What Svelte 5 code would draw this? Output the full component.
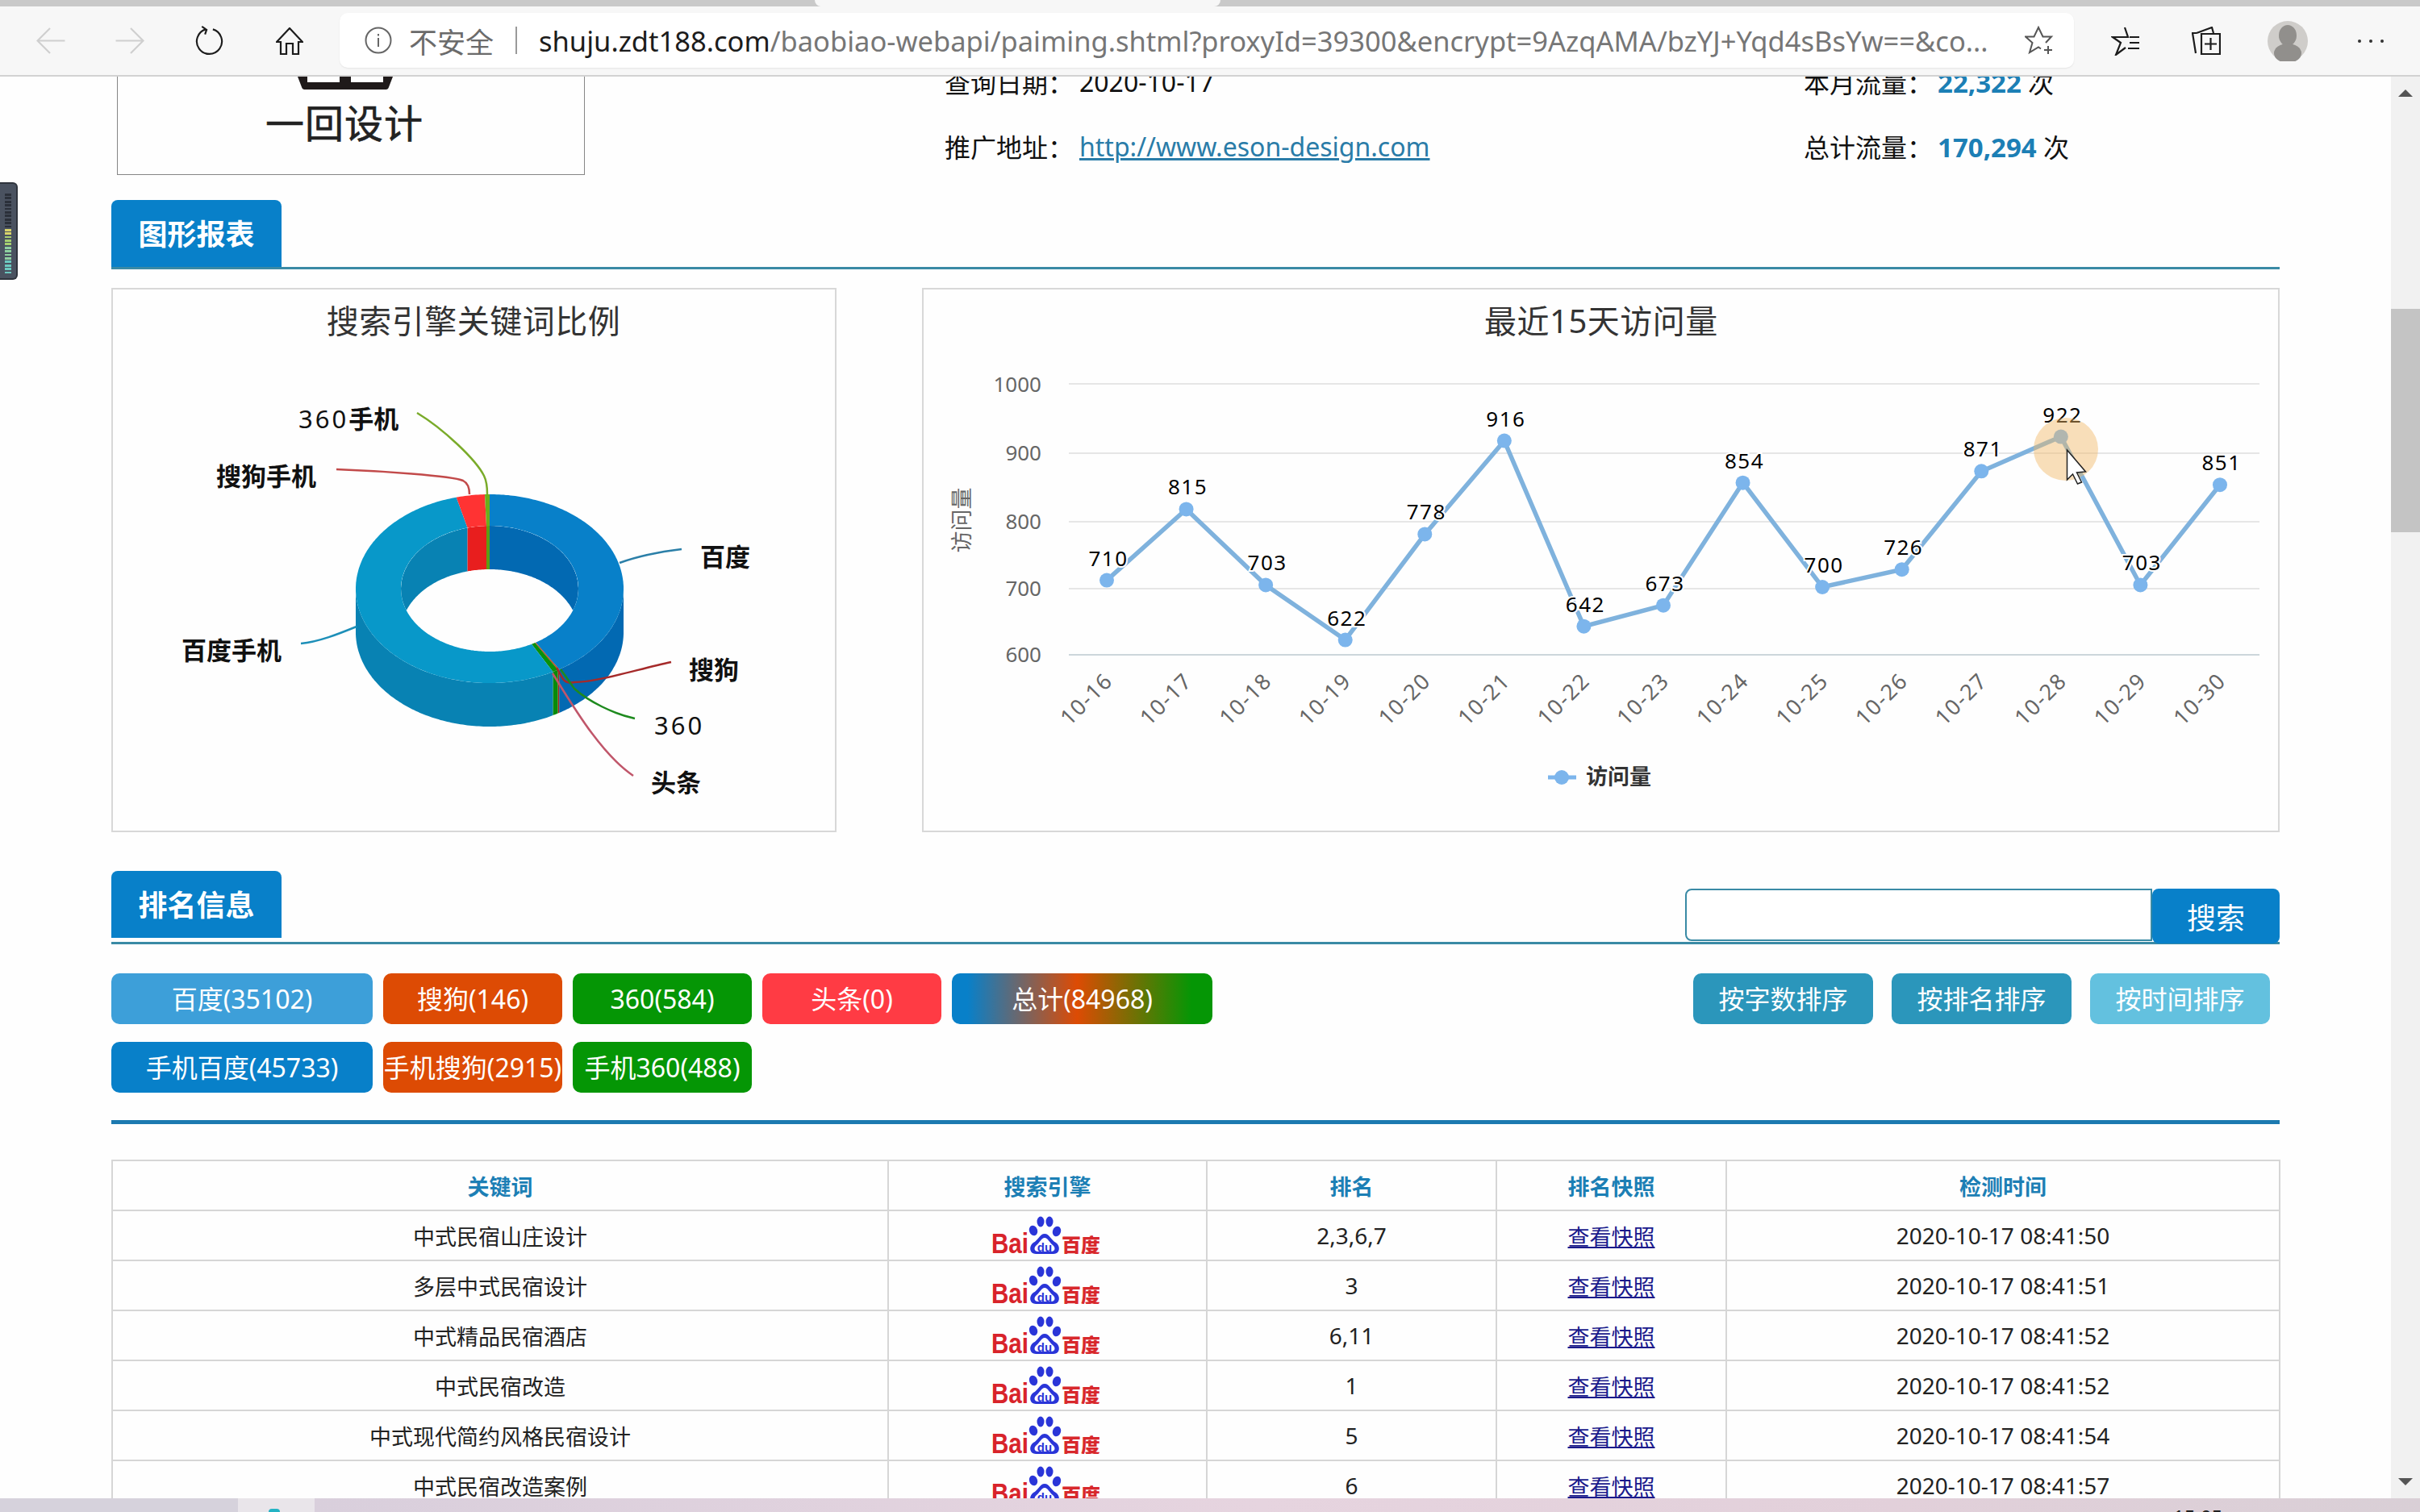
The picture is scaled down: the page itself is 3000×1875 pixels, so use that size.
<script>
	// donut geometry, in page coordinates of the left card
	const cx = 607, cy = 730, rx = 166, ry = 117, irx = 110, iry = 78, depth = 54;

	const slices = [
		{ name: '百度', value: 35102, top: '#0880c9', side: '#0269b2', wall: '#0269b2' },
		{ name: '搜狗', value: 146, top: '#c9401a', side: '#a82020', wall: '#a82020' },
		{ name: '360', value: 584, top: '#0a900a', side: '#0a8a0a', wall: '#0a8a0a' },
		{ name: '百度手机', value: 45733, top: '#0898c9', side: '#0882b3', wall: '#0882b3' },
		{ name: '搜狗手机', value: 2915, top: '#ff3333', side: '#e81e1e', wall: '#e81e1e' },
		{ name: '360手机', value: 488, top: '#6cae1a', side: '#5e9e12', wall: '#5e9e12' }
	];
	const total = 84968;

	function arc(from, to, a, b, dy = 0) {
		const pts = [];
		const n = Math.max(2, Math.ceil(to - from));
		for (let i = 0; i <= n; i++) {
			const t = ((from + ((to - from) * i) / n) * Math.PI) / 180;
			pts.push([cx + a * Math.sin(t), cy - b * Math.cos(t) + dy]);
		}
		return pts;
	}
	const toD = (pts) => 'M' + pts.map((p) => p[0].toFixed(1) + ' ' + p[1].toFixed(1)).join('L') + 'Z';

	let start = 0;
	const donut = slices.map((s) => {
		const from = start;
		const to = start + (s.value / total) * 360;
		start = to;
		const sideFrom = Math.max(from, 90), sideTo = Math.min(to, 270);
		const walls = [[from, Math.min(to, 90)], [Math.max(from, 270), to]].filter((r) => r[1] > r[0]);
		return {
			...s,
			topD: toD([...arc(from, to, rx, ry), ...arc(from, to, irx, iry).reverse()]),
			sideD: sideTo > sideFrom
				? toD([...arc(sideFrom, sideTo, rx, ry), ...arc(sideFrom, sideTo, rx, ry, depth).reverse()])
				: null,
			wallDs: walls.map((r) => toD([...arc(r[0], r[1], irx, iry), ...arc(r[0], r[1], irx, iry, depth).reverse()]))
		};
	});

	const leaders = [
		{ d: 'M768 698 C790 690 820 684 845 681', color: '#2b7fa8' },
		{ d: 'M373 798 C395 796 420 786 442 777', color: '#1d8fb8' },
		{ d: 'M517 512 C550 532 590 570 600 590 Q604 598 604 613', color: '#7aab2a' },
		{ d: 'M417 582 C470 584 560 590 574 596 Q582 600 582 613', color: '#c24a4a' },
		{ d: 'M690 828 L698 842 Q702 848 712 846 C740 846 790 830 832 821', color: '#a52a2a' },
		{ d: 'M695 830 L712 854 C730 870 760 885 787 891', color: '#1e8a1e' },
		{ d: 'M685 835 C710 875 745 935 785 962', color: '#c0566a' }
	];

	// line chart
	const values = [710, 815, 703, 622, 778, 916, 642, 673, 854, 700, 726, 871, 922, 703, 851];
	const days = ['10-16', '10-17', '10-18', '10-19', '10-20', '10-21', '10-22', '10-23', '10-24', '10-25', '10-26', '10-27', '10-28', '10-29', '10-30'];
	const points = values.map((v, i) => ({ v, day: days[i], x: 1372 + i * 98.57, y: 812 - (v - 600) * 0.84 }));
	const linePts = points.map((p) => p.x.toFixed(1) + ',' + p.y.toFixed(1)).join(' ');
	const ticks = [{ v: 1000, y: 476 }, { v: 900, y: 562 }, { v: 800, y: 647 }, { v: 700, y: 730 }, { v: 600, y: 812 }];

	const filters = [
		{ label: '百度(35102)', cls: 'light' },
		{ label: '搜狗(146)', cls: 'orange' },
		{ label: '360(584)', cls: 'green' },
		{ label: '头条(0)', cls: 'red' },
		{ label: '总计(84968)', cls: 'mixed' },
		{ label: '手机百度(45733)', cls: 'blue' },
		{ label: '手机搜狗(2915)', cls: 'orange' },
		{ label: '手机360(488)', cls: 'green' }
	];

	const rows = [
		{ word: '中式民宿山庄设计', rank: '2,3,6,7', time: '2020-10-17 08:41:50' },
		{ word: '多层中式民宿设计', rank: '3', time: '2020-10-17 08:41:51' },
		{ word: '中式精品民宿酒店', rank: '6,11', time: '2020-10-17 08:41:52' },
		{ word: '中式民宿改造', rank: '1', time: '2020-10-17 08:41:52' },
		{ word: '中式现代简约风格民宿设计', rank: '5', time: '2020-10-17 08:41:54' },
		{ word: '中式民宿改造案例', rank: '6', time: '2020-10-17 08:41:57' }
	];

	const meter = Array.from({ length: 23 }, (_, i) => i);
	const meterColor = (i) => {
		if (i < 10) return '#2b303a';
		if (i < 12) return '#d9d36a';
		if (i < 15) return '#a6cf70';
		if (i < 19) return '#8ed0a0';
		return '#6cc9c0';
	};
</script>

<div class="window">
	<header class="chrome">
		<div class="tabstrip"><div class="tab-edge"></div></div>
		<div class="toolbar">
			<svg class="ic back" viewBox="0 0 36 34"><path d="M36 17H1M17 1 1 17l16 16" /></svg>
			<svg class="ic forward" viewBox="0 0 36 34"><path d="M0 17h35M19 1l16 16-16 16" /></svg>
			<svg class="ic reload" viewBox="0 0 36 38"><path d="M13 4.500a16 16 0 1 0 9 0M8 1l6 4-2 6" /></svg>
			<svg class="ic home" viewBox="0 0 34 34"><path d="M1 18 17 1l16 17h-5v15h-7V20h-8v13H6V18Z" /></svg>
			<div class="address">
				<svg class="lock-info" viewBox="0 0 34 34"><circle cx="17" cy="17" r="15.500" /><path d="M17 14v11M17 9v2.500" /></svg>
				<span class="unsafe">不安全</span>
				<span class="sep"></span>
				<div class="url"><span class="host">shuju.zdt188.com</span>/baobiao-webapi/paiming.shtml?proxyId=39300&amp;encrypt=9AzqAMA/bzYJ+Yqd4sBsYw==&amp;co...</div>
				<svg class="star" viewBox="0 0 36 36"><path d="M26 21 33 13.500H22.500L17 2l-5.500 11.500H1L9.500 21 6 33l11-6.500 3 2M29 25v10M24 30h10" /></svg>
			</div>
			<svg class="ic favs" viewBox="0 0 36 36"><path d="M17 1l4 12H2l10 7-6 15 12-9M23 13h12M23 20h12M21 27h14" /></svg>
			<svg class="ic coll" viewBox="0 0 36 36"><path d="M6 8 25 1l2 7M6 8H1l4 25M12 9h23v25H12ZM23.500 14v15M16 21.500h15" /></svg>
			<svg class="avatar" viewBox="0 0 50 50"><circle cx="25" cy="25" r="25" fill="#cfcdca" /><ellipse cx="25" cy="18" rx="11" ry="13" fill="#918f8c" /><ellipse cx="25" cy="40" rx="17" ry="12" fill="#918f8c" /></svg>
			<div class="dots"><i></i><i></i><i></i></div>
		</div>
	</header>

	<div class="viewport">
		<main class="page">
			<section class="head">
				<div class="logo">
					<svg class="mark" viewBox="0 0 118 16"><path d="M0 0h118l-5 13a4 4 0 0 1-4 3H9a4 4 0 0 1-4-3ZM50 0h18M12 0v7h40V0M66 0v7h40V0" fill="#1f1a1a" /><path d="M14 0h36v6H14ZM68 0h36v6H68Z" fill="#fff" /></svg>
					<div class="wordmark">一回设计</div>
				</div>
				<div class="stats">
					<span>查询日期：</span><span>2020-10-17</span>
					<span>本月流量：</span><span><b>22,322</b> 次</span>
					<span>推广地址：</span><span><a href="#site">http://www.eson-design.com</a></span>
					<span>总计流量：</span><span><b>170,294</b> 次</span>
				</div>
			</section>

			<div class="section-head first">
				<h2 class="title">图形报表</h2>
			</div>

			<section class="charts">
				<div class="card">
					<svg width="895" height="671" viewBox="140 359 895 671">
						<defs>
							<clipPath id="hole"><ellipse cx={cx} cy={cy} rx={irx} ry={iry} /></clipPath>
						</defs>
						<text class="chart-title" x="587" y="413">搜索引擎关键词比例</text>
						{#each donut as s}
							{#if s.sideD}<path d={s.sideD} fill={s.side} />{/if}
						{/each}
						<g clip-path="url(#hole)">
							{#each donut as s}
								{#each s.wallDs as d}<path {d} fill={s.wall} />{/each}
							{/each}
						</g>
						{#each donut as s}
							<path d={s.topD} fill={s.top} />
						{/each}
						{#each leaders as l}
							<path d={l.d} fill="none" stroke={l.color} stroke-width="2.500" />
						{/each}
						<text class="pie-label" x="868" y="702">百度</text>
						<text class="pie-label" x="225" y="818">百度手机</text>
						<text class="pie-label" x="268" y="602">搜狗手机</text>
						<text class="pie-label" x="370" y="531"><tspan class="digits">360</tspan>手机</text>
						<text class="pie-label digits" x="811" y="911">360</text>
						<text class="pie-label" x="854" y="842">搜狗</text>
						<text class="pie-label" x="807" y="982">头条</text>
					</svg>
				</div>
				<div class="card">
					<svg width="1679" height="671" viewBox="1145 359 1679 671">
						<text class="chart-title" x="1985" y="413">最近15天访问量</text>
						{#each ticks as t}
							<line x1="1325" x2="2801" y1={t.y} y2={t.y} stroke={t.v === 600 ? '#ccd6db' : '#e6e6e6'} stroke-width="2" />
							<text class="tick" x="1291" y={t.y + (t.v === 1000 ? 10 : 9)}>{t.v}</text>
						{/each}
						<text class="axis-name" transform="translate(1202 645) rotate(-90)">访问量</text>
						<polyline points={linePts} fill="none" stroke="#7fb2dd" stroke-width="5.500" />
						{#each points as p}
							<circle cx={p.x} cy={p.y} r="9" fill="#7cb5ec" />
						{/each}
						{#each points as p}
							<text class="point-label" x={p.x + 2} y={p.y - 18}>{p.v}</text>
							<text class="day" transform="translate({p.x + 9} 846) rotate(-45)">{p.day}</text>
						{/each}
						<line x1="1919" x2="1954" y1="964" y2="964" stroke="#7cb5ec" stroke-width="5" />
						<circle cx="1936" cy="964" r="9" fill="#7cb5ec" />
						<text class="legend" x="1966" y="973">访问量</text>
						<ellipse cx="2561" cy="557" rx="40" ry="39" fill="#f2b866" fill-opacity="0.45" />
						<path d="M2562.500 558v37l7-7 6 12 5-2-6-12 11-1Z" fill="#fff" stroke="#222" stroke-width="1.500" />
					</svg>
				</div>
			</section>

			<div class="section-head second">
				<h2 class="title">排名信息</h2>
				<form class="search">
					<input type="text" />
					<button type="button">搜索</button>
				</form>
			</div>

			<section class="filters">
				<div class="filter-grid">
					{#each filters as f}
						<button type="button" class="chip {f.cls}">{f.label}</button>
					{/each}
				</div>
				<div class="sorts">
					<button type="button" class="chip sort">按字数排序</button>
					<button type="button" class="chip sort">按排名排序</button>
					<button type="button" class="chip sort on">按时间排序</button>
				</div>
			</section>

			<div class="divider"></div>

			<table>
				<colgroup>
					<col class="c1" /><col class="c2" /><col class="c3" /><col class="c4" /><col class="c5" />
				</colgroup>
				<thead>
					<tr><th>关键词</th><th>搜索引擎</th><th>排名</th><th>排名快照</th><th>检测时间</th></tr>
				</thead>
				<tbody>
					{#each rows as r}
						<tr>
							<td class="word">{r.word}</td>
							<td>
								<svg class="baidu" viewBox="0 0 134 47">
									<text class="bai" x="0" y="46" textLength="46" lengthAdjust="spacingAndGlyphs">Bai</text>
									<g fill="#2a35d8">
										<ellipse cx="52" cy="18" rx="5" ry="6.500" transform="rotate(-20 52 18)" />
										<ellipse cx="61" cy="7" rx="4.500" ry="6.500" />
										<ellipse cx="72" cy="7" rx="4.500" ry="6.500" />
										<ellipse cx="81" cy="19" rx="5" ry="6.500" transform="rotate(20 81 19)" />
										<path d="M66 22C60 22 58 30 52 33 46 37 47 47 55 47H77C85 47 86 37 80 33 74 30 72 22 66 22Z" />
									</g>
									<path d="M66 27C62 27 60 33 56 36 52 39 53 44 58 44H74C79 44 80 39 76 36 72 33 70 27 66 27Z" fill="#fff" />
									<text class="du" x="66" y="44">du</text>
									<text class="bai-cn" x="87" y="45">百度</text>
								</svg>
							</td>
							<td>{r.rank}</td>
							<td class="word"><a href="#snap">查看快照</a></td>
							<td>{r.time}</td>
						</tr>
					{/each}
				</tbody>
			</table>
		</main>

		<aside class="scrollbar">
			<span class="arrow up"></span>
			<span class="thumb"></span>
			<span class="arrow down"></span>
		</aside>

		<div class="meter">
			{#each meter as i}
				<i style="background:{meterColor(i)}"></i>
			{/each}
		</div>
	</div>

	<footer class="taskbar">
		<div class="task-start"></div>
		<div class="task-active"><span class="spot"></span></div>
		<div class="task-rest"><span class="clock">15:05</span></div>
	</footer>
</div>

<style>
	:global(body) {
		margin: 0;
		background: #fff;
	}

	.window {
		width: 3000px;
		height: 1875px;
		display: flex;
		flex-direction: column;
		overflow: hidden;
		font-family: "Noto Sans", "Noto Sans CJK SC", sans-serif;
		color: #111;
	}

	/* browser chrome */
	.chrome {
		flex: none;
		height: 95px;
		box-sizing: border-box;
		background: #f7f7f7;
		border-bottom: 2px solid #d2d2d2;
	}
	.tabstrip {
		height: 8px;
		background: #c9c9c9;
		padding-left: 1010px;
	}
	.tab-edge {
		width: 503px;
		height: 8px;
		background: #f7f7f7;
		border-radius: 0 0 8px 8px;
	}
	.toolbar {
		height: 85px;
		display: flex;
		align-items: center;
	}
	.ic {
		flex: none;
		fill: none;
		stroke: #1c1c1c;
		stroke-width: 2.200;
	}
	.back, .forward {
		width: 36px;
		height: 33px;
		stroke: #cfcfcf;
		margin-top: -1px;
	}
	.back { margin-left: 45px; }
	.forward { margin-left: 62px; }
	.reload {
		width: 36px;
		height: 37px;
		margin-left: 63px;
	}
	.home {
		width: 34px;
		height: 34px;
		margin-left: 64px;
	}
	.address {
		flex: none;
		width: 2150px;
		height: 68px;
		margin-left: 45px;
		margin-top: -1px;
		background: #fff;
		border-radius: 10px;
		box-shadow: 0 1px 2px rgba(0, 0, 0, 0.08);
		display: flex;
		align-items: center;
		box-sizing: border-box;
		padding-left: 31px;
	}
	.lock-info {
		flex: none;
		width: 34px;
		height: 34px;
		fill: none;
		stroke: #666;
		stroke-width: 2;
	}
	.unsafe {
		flex: none;
		width: 105px;
		margin-left: 21px;
		font-size: 35px;
		color: #6b6b6b;
		white-space: nowrap;
	}
	.sep {
		flex: none;
		width: 2px;
		height: 34px;
		margin-left: 27px;
		background: #9a9a9a;
	}
	.url {
		flex: none;
		margin-left: 27px;
		width: 1800px;
		overflow: hidden;
		font-size: 34.500px;
		color: #767676;
		white-space: nowrap;
	}
	.host { color: #1c1c1c; }
	.star {
		flex: none;
		width: 36px;
		height: 36px;
		margin-left: 42px;
		fill: none;
		stroke: #555;
		stroke-width: 2;
	}
	.favs {
		width: 36px;
		height: 36px;
		margin-left: 46px;
	}
	.coll {
		width: 36px;
		height: 36px;
		margin-left: 64px;
	}
	.avatar {
		flex: none;
		width: 50px;
		height: 50px;
		margin-left: 58px;
	}
	.dots {
		display: flex;
		gap: 10px;
		margin-left: 62px;
	}
	.dots i {
		width: 4px;
		height: 4px;
		border-radius: 50%;
		background: #333;
	}

	/* scrolled page */
	.viewport {
		position: relative;
		flex: 1;
		min-height: 0;
		display: flex;
		background: #fefefe;
	}
	.page {
		flex: 1;
		min-width: 0;
		overflow: hidden;
		box-sizing: border-box;
		padding: 0 138px;
	}

	.head {
		display: flex;
		height: 180px;
		margin-top: -58px;
	}
	.logo {
		flex: none;
		width: 580px;
		height: 180px;
		margin-left: 7px;
		box-sizing: border-box;
		border: 1.500px solid #868686;
		display: flex;
		flex-direction: column;
		align-items: center;
		justify-content: flex-end;
		padding-bottom: 37px;
	}
	.mark {
		width: 118px;
		height: 16px;
		margin-left: -14px;
		margin-bottom: 16px;
	}
	.wordmark {
		margin-left: -16px;
		font-size: 48px;
		line-height: 52px;
		letter-spacing: 1px;
		color: #222;
		-webkit-text-stroke: 0.6px #222;
	}
	.stats {
		margin-left: 446px;
		margin-top: 24px;
		display: grid;
		grid-template-columns: 167px 898px 166px auto;
		grid-auto-rows: 80px;
		align-items: center;
		font-size: 32px;
		color: #111;
		white-space: nowrap;
	}
	.stats a {
		color: #2a7ca8;
		text-decoration-thickness: 3px;
	}
	.stats b {
		color: #1c7fb5;
		font-size: 33px;
	}

	.section-head {
		box-sizing: border-box;
		display: flex;
		justify-content: space-between;
		border-bottom: 3px solid #3a8aa5;
	}
	.section-head.first {
		margin-top: 31px;
		height: 86px;
	}
	.section-head.second {
		margin-top: 48px;
		height: 91px;
	}
	.title {
		flex: none;
		margin: 0;
		width: 211px;
		height: 83px;
		box-sizing: border-box;
		background: #0880c9;
		border-radius: 8px 8px 0 0;
		color: #fff;
		font-size: 36px;
		font-weight: 700;
		line-height: 86px;
		text-align: center;
	}
	.search {
		align-self: flex-end;
		display: flex;
		margin-bottom: -2px;
	}
	.search input {
		width: 579px;
		height: 65px;
		box-sizing: border-box;
		margin: 0 0 3px;
		border: 2px solid #3a8aa5;
		border-radius: 8px 0 0 8px;
		background: #fff;
		outline: none;
	}
	.search button {
		width: 158px;
		height: 68px;
		border: 0;
		padding: 0;
		border-radius: 8px;
		background: #0880c9;
		color: #fff;
		font: inherit;
		font-size: 36px;
	}

	.charts {
		display: flex;
		justify-content: space-between;
		margin-top: 23px;
	}
	.card {
		flex: none;
		border: 2px solid #d8d8d8;
		background: #fefefe;
	}
	.card svg {
		display: block;
	}
	.card text {
		font-family: "Noto Sans", "Noto Sans CJK SC", sans-serif;
	}
	.chart-title {
		font-size: 40px;
		letter-spacing: 0.5px;
		fill: #333;
		text-anchor: middle;
	}
	.pie-label {
		font-size: 31px;
		font-weight: 700;
		fill: #111;
	}
	.digits {
		font-weight: 400;
		letter-spacing: 3px;
	}
	.tick {
		font-size: 26px;
		fill: #666;
		text-anchor: end;
	}
	.axis-name {
		font-size: 27px;
		fill: #666;
		text-anchor: middle;
	}
	.point-label {
		font-size: 26px;
		letter-spacing: 1.500px;
		fill: #000;
		text-anchor: middle;
		stroke: #fff;
		stroke-width: 4px;
		paint-order: stroke;
	}
	.day {
		font-size: 27px;
		letter-spacing: 1.500px;
		fill: #666;
		text-anchor: end;
	}
	.legend {
		font-size: 27px;
		font-weight: 700;
		fill: #333;
	}

	.filters {
		display: flex;
		justify-content: space-between;
		align-items: flex-start;
		margin-top: 36px;
	}
	.filter-grid {
		display: grid;
		grid-template-columns: 324px 222px 222px 222px 323px;
		grid-auto-rows: 63px;
		gap: 22px 13px;
	}
	.chip {
		border: 0;
		padding: 0;
		height: 63px;
		border-radius: 10px;
		color: #fff;
		font: inherit;
		font-size: 32px;
		line-height: 63px;
		white-space: nowrap;
	}
	.light { background: #3d9fd9; }
	.blue { background: #0880c9; }
	.orange { background: #dd4b04; }
	.green { background: #059605; }
	.red { background: #ff3b44; }
	.mixed {
		background: linear-gradient(90deg, #0880c9 6%, #dd4b04 48%, #059605 92%);
	}
	.sorts {
		display: flex;
		gap: 23px;
		margin-right: 12px;
	}
	.sort {
		width: 223px;
		background: #2b96bb;
	}
	.sort.on {
		background: #63c1df;
	}

	.divider {
		height: 5px;
		margin-top: 34px;
		background: #1c7ab0;
	}

	table {
		width: 2687px;
		margin-top: 44px;
		border-collapse: collapse;
		table-layout: fixed;
		font-size: 28px;
		color: #222;
	}
	.c1 { width: 962px; }
	.c2 { width: 395px; }
	.c3 { width: 359px; }
	.c4 { width: 285px; }
	.c5 { width: 686px; }
	th, td {
		height: 60px;
		padding: 0;
		border: 2px solid #d6d6d6;
		text-align: center;
	}
	th {
		color: #1c7fb5;
		font-size: 27px;
		font-weight: 700;
	}
	td.word {
		font-size: 27px;
	}
	td a {
		color: #1a1a8c;
	}
	.baidu {
		display: block;
		width: 134px;
		height: 47px;
		margin: -2px 0 0 127px;
	}
	.bai {
		font-family: "Liberation Sans", sans-serif;
		font-size: 35px;
		font-weight: 700;
		fill: #d8232a;
	}
	.bai-cn {
		font-family: "Noto Sans CJK SC", sans-serif;
		font-size: 24px;
		font-weight: 900;
		fill: #d8282c;
	}
	.du {
		font-family: "Liberation Sans", sans-serif;
		font-size: 15px;
		font-weight: 700;
		fill: #2a35d8;
		text-anchor: middle;
	}

	.scrollbar {
		flex: none;
		width: 36px;
		background: #f1f1f1;
		display: flex;
		flex-direction: column;
		align-items: center;
	}
	.arrow {
		width: 0;
		height: 0;
		border-left: 9px solid transparent;
		border-right: 9px solid transparent;
	}
	.arrow.up {
		margin-top: 16px;
		border-bottom: 9px solid #555;
	}
	.arrow.down {
		margin-top: auto;
		margin-bottom: 16px;
		border-top: 9px solid #555;
	}
	.thumb {
		width: 36px;
		height: 277px;
		margin-top: 263px;
		background: #c4c4c4;
	}

	.meter {
		position: absolute;
		left: 0;
		top: 131px;
		width: 14px;
		height: 105px;
		padding: 12px 0 0 6px;
		display: flex;
		flex-direction: column;
		gap: 1.600px;
		background: #4a5260;
		border: 2px solid #2f343d;
		border-left: 0;
		border-radius: 0 6px 6px 0;
	}
	.meter i {
		display: block;
		width: 8px;
		height: 2.800px;
	}

	.taskbar {
		flex: none;
		height: 17px;
		display: flex;
		overflow: hidden;
	}
	.task-start {
		width: 295px;
		background: #d6d2dc;
	}
	.task-active {
		width: 95px;
		background: #e9e5ea;
	}
	.spot {
		display: block;
		width: 14px;
		height: 4px;
		margin: 13px 0 0 38px;
		border-radius: 7px 7px 0 0;
		background: #24b3c4;
	}
	.task-rest {
		flex: 1;
		background: linear-gradient(90deg, #d9cfdc, #e6d4df 45%, #e2d0da 75%, #d9cfd6);
		padding-left: 2304px;
	}
	.clock {
		display: block;
		margin-top: 8px;
		font-size: 24px;
		line-height: 30px;
		color: #222;
	}
</style>
